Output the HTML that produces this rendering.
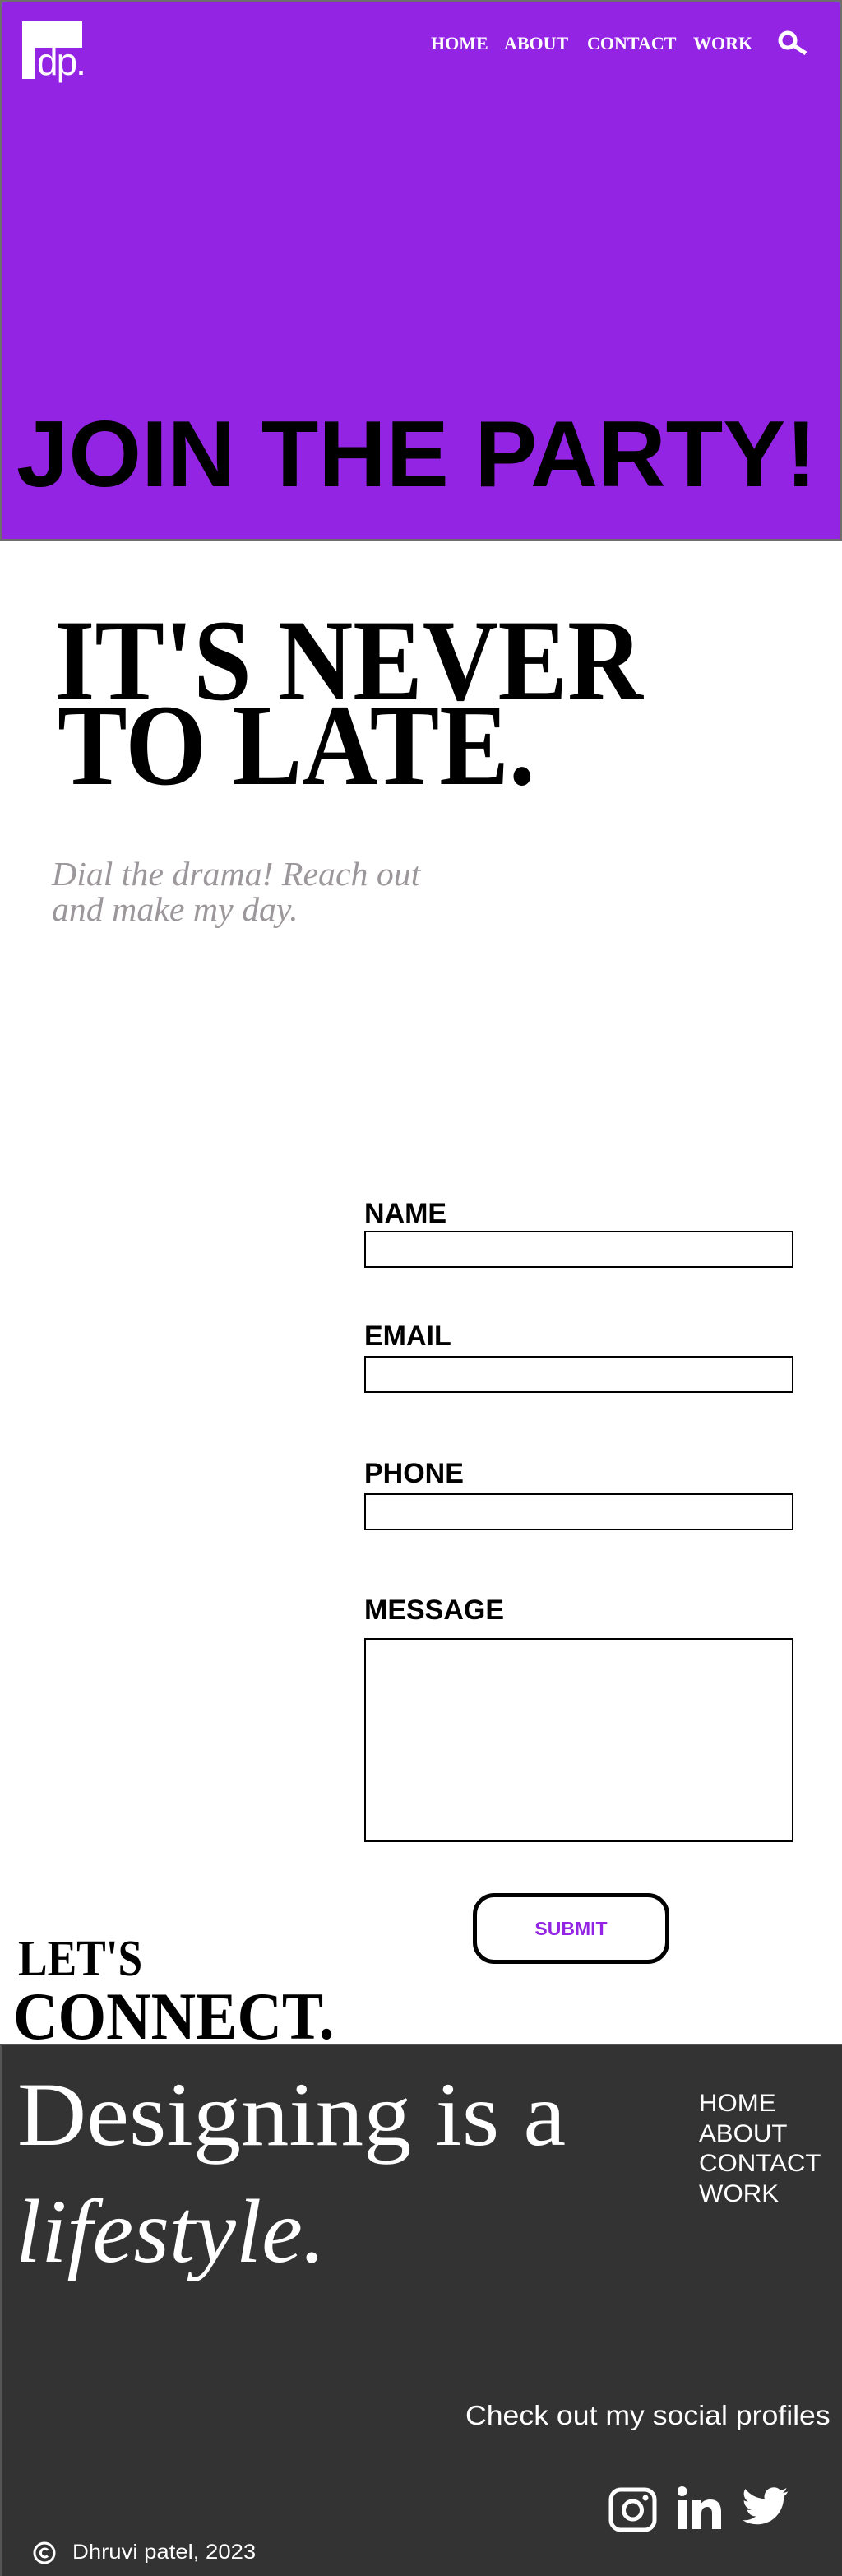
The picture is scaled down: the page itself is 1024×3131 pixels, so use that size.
<!DOCTYPE html>
<html><head><meta charset="utf-8"><style>
*{margin:0;padding:0;box-sizing:border-box}
body{width:1024px;height:3131px;position:relative;background:#fff;overflow:hidden;font-family:"Liberation Sans",sans-serif}
.a{position:absolute;white-space:nowrap}
.serif{font-family:"Liberation Serif",serif}
#hero{position:absolute;left:0;top:0;width:1024px;height:658px;background:#9424e4;border:3px solid #6e6e6e}
.nav{font-family:"Liberation Serif",serif;font-weight:bold;font-size:22px;color:#fff;line-height:22px;top:42px}
.lbl{font-weight:bold;font-size:34px;line-height:34px;left:443px;color:#000}
.inp{position:absolute;left:443px;width:522px;border:2px solid #000}
footer{position:absolute;left:0;top:2484px;width:1024px;height:647px;background:#333;border-top:2px solid #555;border-left:2px solid #555}
.fn{color:#fff;font-size:30px;line-height:36.5px;font-weight:300}
</style></head><body>
<div id="hero"></div>
<div class="a" style="left:27px;top:26px;width:73px;height:32px;background:#fff"></div>
<div class="a" style="left:27px;top:26px;width:16px;height:70px;background:#fff"></div>
<div class="a" style="left:45px;top:52px;font-size:46px;line-height:46px;color:#fff;font-weight:300;letter-spacing:-2px">dp.</div>
<div class="a nav" style="left:524px">HOME</div>
<div class="a nav" style="left:613px">ABOUT</div>
<div class="a nav" style="left:714px">CONTACT</div>
<div class="a nav" style="left:843px">WORK</div>
<svg class="a" style="left:944px;top:37px" width="40" height="30" viewBox="0 0 40 30"><circle cx="14" cy="12" r="9" fill="none" stroke="#fff" stroke-width="5"/><line x1="21" y1="18" x2="36" y2="28" stroke="#fff" stroke-width="5"/></svg>
<div class="a" style="left:20px;top:488px;font-size:114px;line-height:130px;font-weight:bold;color:#000;transform:scaleX(1.0);transform-origin:left">JOIN THE PARTY!</div>

<div class="a serif" style="left:66px;top:753px;font-size:141px;line-height:101px;font-weight:bold;transform:scaleX(0.9);transform-origin:left">IT'S NEVER</div>
<div class="a serif" style="left:70px;top:856px;font-size:141px;line-height:101px;font-weight:bold;transform:scaleX(0.9);transform-origin:left">TO LATE.</div>
<div class="a serif" style="left:63px;top:1041px;font-size:41px;line-height:43px;font-style:italic;color:#9b979b;transform:scaleX(1.02);transform-origin:left">Dial the drama! Reach out<br>and make my day.</div>

<div class="a lbl" style="top:1458px">NAME</div>
<div class="inp" style="top:1496px;height:45px"></div>
<div class="a lbl" style="top:1607px">EMAIL</div>
<div class="inp" style="top:1648px;height:45px"></div>
<div class="a lbl" style="top:1774px">PHONE</div>
<div class="inp" style="top:1815px;height:45px"></div>
<div class="a lbl" style="top:1940px">MESSAGE</div>
<div class="inp" style="top:1991px;height:248px"></div>
<div class="a" style="left:575px;top:2301px;width:239px;height:86px;border:5px solid #000;border-radius:26px;text-align:center;line-height:76px;color:#9424e4;font-weight:bold;font-size:23px">SUBMIT</div>

<div class="a serif" style="left:22px;top:2350px;font-size:62px;line-height:62px;font-weight:bold;transform:scaleX(0.86);transform-origin:left">LET'S</div>
<div class="a serif" style="left:16px;top:2410px;font-size:82px;line-height:82px;font-weight:bold;transform:scaleX(0.92);transform-origin:left">CONNECT.</div>

<footer></footer>
<div class="a serif" style="left:21px;top:2510px;font-size:110px;line-height:120px;color:#fff;transform:scaleX(1.06);transform-origin:left">Designing is a</div>
<div class="a serif" style="left:19px;top:2652px;font-size:110px;line-height:120px;color:#fff;font-style:italic;transform:scaleX(1.02);transform-origin:left">lifestyle.</div>
<div class="a fn" style="left:850px;top:2539px;transform:scaleX(1.04);transform-origin:left">HOME<br>ABOUT<br>CONTACT<br>WORK</div>
<div class="a" style="left:566px;top:2916px;font-size:33px;line-height:40px;color:#fff;font-weight:300;transform:scaleX(1.08);transform-origin:left">Check out my social profiles</div>
<svg class="a" style="left:740px;top:3023px" width="59" height="55" viewBox="0 0 59 55"><rect x="3" y="3" width="53" height="49" rx="12" fill="none" stroke="#fff" stroke-width="5"/><circle cx="29.5" cy="28" r="11" fill="none" stroke="#fff" stroke-width="5"/><circle cx="45" cy="13" r="3.5" fill="#fff"/></svg>
<svg class="a" style="left:824px;top:3022px" width="53" height="52" viewBox="0 0 53 52"><rect x="0" y="17" width="11" height="35" fill="#fff"/><circle cx="5.5" cy="6" r="6" fill="#fff"/><path d="M18 17h10v5c3-5 8-6 12-6 9 0 13 6 13 15v21H42V33c0-5-2-8-6-8s-7 3-7 8v19H18z" fill="#fff"/></svg>
<svg class="a" style="left:903px;top:3022px" width="56" height="52" viewBox="0 0 24 22"><path d="M23.6 2.6c-.9.4-1.8.6-2.8.8 1-.6 1.8-1.6 2.1-2.7-.9.6-2 1-3.1 1.2A4.9 4.9 0 0 0 11.5 6.4 13.9 13.9 0 0 1 1.4 1.200a4.9 4.9 0 0 0 1.5 6.6c-.8 0-1.600-.3-2.2-.6 0 2.4 1.7 4.4 3.9 4.8-.7.2-1.5.2-2.2.1.6 2 2.4 3.4 4.6 3.4A9.9 9.9 0 0 1 0 17.5 14 14 0 0 0 7.5 19.7c9.1 0 14-7.5 14-14v-.6c1-.7 1.8-1.6 2.1-2.5z" fill="#fff"/></svg>
<svg class="a" style="left:38px;top:3087px" width="32" height="32" viewBox="0 0 32 32"><circle cx="16" cy="16" r="12" fill="none" stroke="#fff" stroke-width="3"/><path d="M20 12.5a5 5 0 1 0 0 7" fill="none" stroke="#fff" stroke-width="3"/></svg>
<div class="a" style="left:88px;top:3086px;font-size:25px;line-height:32px;color:#fff;font-weight:300;transform:scaleX(1.1);transform-origin:left">Dhruvi patel, 2023</div>
</body></html>
